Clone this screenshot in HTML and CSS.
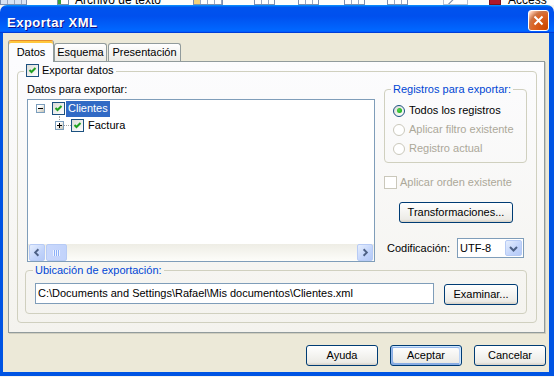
FILE: index.html
```html
<!DOCTYPE html>
<html lang="es">
<head>
<meta charset="utf-8">
<title>Exportar XML</title>
<link rel="stylesheet" href="styles.css">
</head>
<body>
<div class="backdrop">
  <span class="bd grid g0"></span>
  <span class="bd docicon"></span>
  <span class="bd bdtext t-archivo">Archivo de texto</span>
  <span class="bd grid g1"></span>
  <span class="bd grid g2"></span>
  <span class="bd grid g3"></span>
  <span class="bd grid g4"></span>
  <span class="bd grid g5"></span>
  <span class="bd diag"></span>
  <span class="bd accicon"></span>
  <span class="bd bdtext t-access">Access</span>
</div>
<div class="window">
  <div class="titlebar">
    <span class="title">Exportar XML</span>
    <span class="close"><svg width="13" height="13" viewBox="0 0 13 13"><path d="M2.5 2.5 L10.5 10.5 M10.5 2.5 L2.5 10.5" stroke="#fff" stroke-width="2" fill="none"/></svg></span>
  </div>
  <div class="client">
    <div class="tabs">
      <div class="tab tab-datos active">Datos</div>
      <div class="tab tab-esquema">Esquema</div>
      <div class="tab tab-pres">Presentación</div>
    </div>
    <div class="panel">
      <div class="group outer">
        <div class="legend legend-outer"><span class="chk"><svg width="11" height="11" viewBox="0 0 11 11"><path d="M2.5 5 L4.5 7 L8.5 3" stroke="#21a121" stroke-width="2" fill="none"/></svg></span><span>Exportar datos</span></div>
        <div class="top-row">
          <div class="left-col">
            <div class="label">Datos para exportar:</div>
            <div class="tree">
              <div class="tree-body">
                <div class="node n1"><span class="expander"><span class="minus-bar"></span></span><span class="chk"><svg width="11" height="11" viewBox="0 0 11 11"><path d="M2.5 5 L4.5 7 L8.5 3" stroke="#21a121" stroke-width="2" fill="none"/></svg></span><span class="node-label selected">Clientes</span></div>
                <div class="node n2"><span class="expander plus"><span class="minus-bar"></span><span class="plus-bar"></span></span><span class="hline"></span><span class="chk"><svg width="11" height="11" viewBox="0 0 11 11"><path d="M2.5 5 L4.5 7 L8.5 3" stroke="#21a121" stroke-width="2" fill="none"/></svg></span><span class="node-label">Factura</span></div>
              </div>
              <div class="hscroll">
                <span class="sb-btn"><svg width="15" height="15" viewBox="0 0 15 15"><path d="M9 4 L5.5 7.5 L9 11" stroke="#4d6185" stroke-width="2" fill="none"/></svg></span>
                <span class="sb-thumb"><span class="grip"></span></span>
                <span class="sb-track"></span>
                <span class="sb-btn"><svg width="15" height="15" viewBox="0 0 15 15"><path d="M6 4 L9.5 7.5 L6 11" stroke="#4d6185" stroke-width="2" fill="none"/></svg></span>
              </div>
            </div>
          </div>
          <div class="right-col">
            <div class="group registros">
              <div class="legend legend-reg">Registros para exportar:</div>
              <div class="radio-row"><span class="radio on"><span class="dot"></span></span>Todos los registros</div>
              <div class="radio-row disabled"><span class="radio"></span>Aplicar filtro existente</div>
              <div class="radio-row disabled"><span class="radio"></span>Registro actual</div>
            </div>
            <div class="check-row disabled"><span class="chk dis"></span>Aplicar orden existente</div>
            <div class="btn btn-transform">Transformaciones...</div>
            <div class="codif"><span>Codificación:</span><div class="select"><span class="sel-text">UTF-8</span><span class="drop"><svg width="15" height="15" viewBox="0 0 15 15"><path d="M4 6 L7.5 9.5 L11 6" stroke="#4d6185" stroke-width="2" fill="none"/></svg></span></div></div>
          </div>
        </div>
        <div class="group ubic">
          <div class="legend legend-ubic">Ubicación de exportación:</div>
          <div class="path-row"><div class="input">C:\Documents and Settings\Rafael\Mis documentos\Clientes.xml</div><div class="btn btn-exam">Examinar...</div></div>
        </div>
      </div>
    </div>
    <div class="buttons"><div class="btn">Ayuda</div><div class="btn default">Aceptar</div><div class="btn">Cancelar</div></div>
  </div>
</div>
</body>
</html>
```

FILE: styles.css
```css
*{box-sizing:border-box;}
html,body{margin:0;padding:0;}
body{width:554px;height:377px;overflow:hidden;background:#f4f4f1;font-family:"Liberation Sans",Arial,sans-serif;font-size:11px;line-height:13px;color:#000;}

/* backdrop toolbar of the window behind */
.backdrop{display:flex;height:5px;overflow:hidden;background:#fdfdfc;}
.bd{flex:none;margin-top:-6px;height:11px;}
.grid{border:1px solid #7d8fb0;background-color:#fff;background-image:repeating-linear-gradient(90deg,transparent 0 6px,#9aa8c2 6px 7px),repeating-linear-gradient(180deg,transparent 0 4px,#9aa8c2 4px 5px);}
.g0{width:27px;background-color:#d9e3f4;}
.docicon{width:12px;margin-left:30px;background:#fff;border:1px solid #7b8fa8;box-shadow:inset 3px 0 #3aa03a;}
.bdtext{margin-top:-6px;height:13px;font-size:12px;line-height:13px;white-space:nowrap;}
.t-archivo{margin-left:6px;width:100px;}
.g1{margin-left:18px;width:30px;box-shadow:inset 6px 0 #f2d27a;}
.g2{margin-left:31px;width:21px;}
.g3{margin-left:23px;width:21px;}
.g4{margin-left:25px;width:21px;}
.g5{margin-left:22px;width:21px;}
.diag{margin-left:35px;width:25px;background:linear-gradient(135deg,#fff 40%,#8a97b0 41% 46%,#fff 47%);border:1px solid #b8c0cf;}
.accicon{margin-left:21px;width:12px;background:#b0182a;border:1px solid #7a0f1c;}
.t-access{margin-left:7px;}

/* window frame */
.window{width:554px;}
.titlebar{display:flex;justify-content:space-between;align-items:flex-start;height:28px;padding:0 5px 0 7px;border-radius:7px 7px 0 0;background:linear-gradient(180deg,#0997ff,#0053ee 8%,#0050ee 40%,#06f 88%,#06f 93%,#005bff 95%,#003dd7 96%,#003dd7);}
.title{margin-top:10px;font-weight:bold;font-size:13px;line-height:15px;letter-spacing:0.5px;color:#fff;text-shadow:1px 1px #0f1089;}
.close{margin-top:5px;width:21px;height:21px;border:1px solid #fff;border-radius:3px;background:radial-gradient(circle at 90% 90%,#cc4600 0,#dc6527 55%,#cd7546 70%,#ffccb2 90%,#fff 100%);display:flex;align-items:center;justify-content:center;}
.client{display:flex;flex-direction:column;height:343px;background:#ece9d8;border-style:solid;border-color:#0054e3;border-width:0 5px 4px 3px;}

/* tabs */
.tabs{display:flex;align-items:flex-end;height:21px;margin:7px 0 0 5px;position:relative;z-index:1;}
.tab{flex:none;height:18px;display:flex;align-items:center;justify-content:center;border:1px solid #919b9c;border-bottom:none;border-radius:3px 3px 0 0;background:linear-gradient(#fff,#ecebe6);}
.tab.active{height:22px;margin-bottom:-1px;background:#fcfcfe;border-top:1px solid #e68b2c;box-shadow:inset 0 2px #ffc73c;padding-top:2px;}
.tab-datos{width:46px;}
.tab-esquema{width:53px;}
.tab-pres{width:73px;margin-left:1px;}

/* tab panel */
.panel{margin-left:5px;width:537px;height:272px;border:1px solid #919b9c;background:linear-gradient(#fcfcfe,#f4f3ee);box-shadow:1px 1px 0 #d0cebf;}

.group{position:relative;border:1px solid #d0d0bf;border-radius:4px;}
.legend{position:absolute;display:flex;align-items:center;height:13px;padding:0 2px;white-space:nowrap;}
.outer{margin:9px 0 0 8px;width:520px;height:252px;padding:11px 9px 0 7px;}
.legend-outer{top:-8px;left:6px;gap:3px;background:#fbfbfc;}
.top-row{display:flex;gap:9px;margin-left:2px;height:179px;}
.left-col{width:348px;display:flex;flex-direction:column;}
.label{height:13px;margin-bottom:3px;}

/* tree */
.tree{flex:1;display:flex;flex-direction:column;border:1px solid #7f9db9;background:#fff;}
.tree-body{flex:1;}
.node{display:flex;align-items:center;height:17px;}
.n1{padding-left:8px;}
.n2{padding-left:27px;}
.expander{position:relative;flex:none;width:9px;height:9px;border:1px solid #7b9ebd;background:linear-gradient(135deg,#fff 30%,#c6c2b2);}
.minus-bar{position:absolute;left:1px;top:3px;width:5px;height:1px;background:#000;}
.plus-bar{position:absolute;left:3px;top:1px;width:1px;height:5px;background:#000;}
.plus::before{content:"";position:absolute;left:3px;top:-6px;height:4px;border-left:1px dotted #a0a0a0;}
.n1 .chk{margin-left:7px;}
.hline{width:7px;height:1px;border-top:1px dotted #a0a0a0;}
.chk{flex:none;display:inline-flex;align-items:center;justify-content:center;width:13px;height:13px;border:1px solid #1c5180;background:linear-gradient(135deg,#dcdcd7,#fff);}
.chk.dis{border-color:#cac8bb;background:#fff;}
.node-label{height:16px;display:flex;align-items:center;padding:0 2px;margin-left:1px;}
.n2 .node-label{margin-left:2px;}
.node-label.selected{background:#316ac5;color:#fff;}

.hscroll{display:flex;height:17px;padding:0 1px;background:linear-gradient(#eeede5,#fdfdfa);}
.sb-btn{flex:none;width:16px;height:17px;border:1px solid #b7cbf5;border-radius:2px;background:linear-gradient(135deg,#e6eefd,#c2d4fb 60%,#b4c9f7);display:flex;align-items:center;justify-content:center;}
.sb-thumb{flex:none;width:21px;height:17px;margin-left:1px;border:1px solid #b7cbf5;border-radius:2px;background:linear-gradient(90deg,#c9d8fc,#c2d3fb);display:flex;align-items:center;justify-content:center;}
.grip{width:7px;height:6px;background:repeating-linear-gradient(90deg,#eef4fe 0 1px,#8cb0f8 1px 2px);}
.sb-track{flex:1;}

/* right column */
.right-col{width:143px;display:flex;flex-direction:column;}
.registros{margin-top:6px;height:74px;padding-top:11px;padding-left:8px;}
.legend-reg{top:-7px;left:6px;color:#0046d5;background:#fbfbfa;}
.radio-row{display:flex;align-items:center;height:19px;white-space:nowrap;}
.radio{flex:none;width:12px;height:12px;margin-right:4px;border:1px solid #1c5180;border-radius:50%;background:linear-gradient(135deg,#dcdcd7,#fff);display:flex;align-items:center;justify-content:center;}
.dot{width:5px;height:5px;border-radius:50%;background:radial-gradient(circle at 40% 40%,#55d551,#09a309);}
.disabled{color:#aca899;}
.disabled .radio{border-color:#cac8bb;background:#fff;}
.check-row{display:flex;align-items:center;gap:3px;height:13px;margin-top:13px;white-space:nowrap;}

.btn{flex:none;display:flex;align-items:center;justify-content:center;height:21px;border:1px solid #003c74;border-radius:3px;background:linear-gradient(180deg,#fff,#ecebe6 86%,#d6d0c5);white-space:nowrap;}
.btn.default{box-shadow:inset -1px 1px #cee7ff,inset 1px 2px #98b8ea,inset -2px 2px #bcd4f6,inset 1px -1px #89ade4,inset 2px -2px #89ade4;}
.btn-transform{margin:13px 0 0 15px;width:114px;}
.codif{display:flex;align-items:center;justify-content:space-between;margin-top:15px;padding:0 3px;}
.select{width:67px;height:20px;border:1px solid #7f9db9;background:#fff;display:flex;align-items:center;justify-content:space-between;padding:0 1px 0 2px;}
.drop{width:17px;height:16px;border:1px solid #b7cbf5;border-radius:2px;background:linear-gradient(135deg,#e6eefd,#c2d4fb 60%,#b4c9f7);display:flex;align-items:center;justify-content:center;}

/* ubicacion */
.ubic{margin-top:8px;width:502px;height:44px;padding:12px 0 0 9px;}
.legend-ubic{top:-7px;left:7px;color:#0046d5;background:#f5f5f1;}
.path-row{display:flex;align-items:flex-start;}
.input{width:399px;height:21px;border:1px solid #7f9db9;background:#fff;display:flex;align-items:center;padding-left:2px;white-space:nowrap;overflow:hidden;}
.btn-exam{width:74px;margin:1px 0 0 10px;}

/* dialog buttons */
.buttons{display:flex;justify-content:flex-end;gap:12px;margin-top:12px;padding-right:3px;}
.buttons .btn{width:72px;}
```
